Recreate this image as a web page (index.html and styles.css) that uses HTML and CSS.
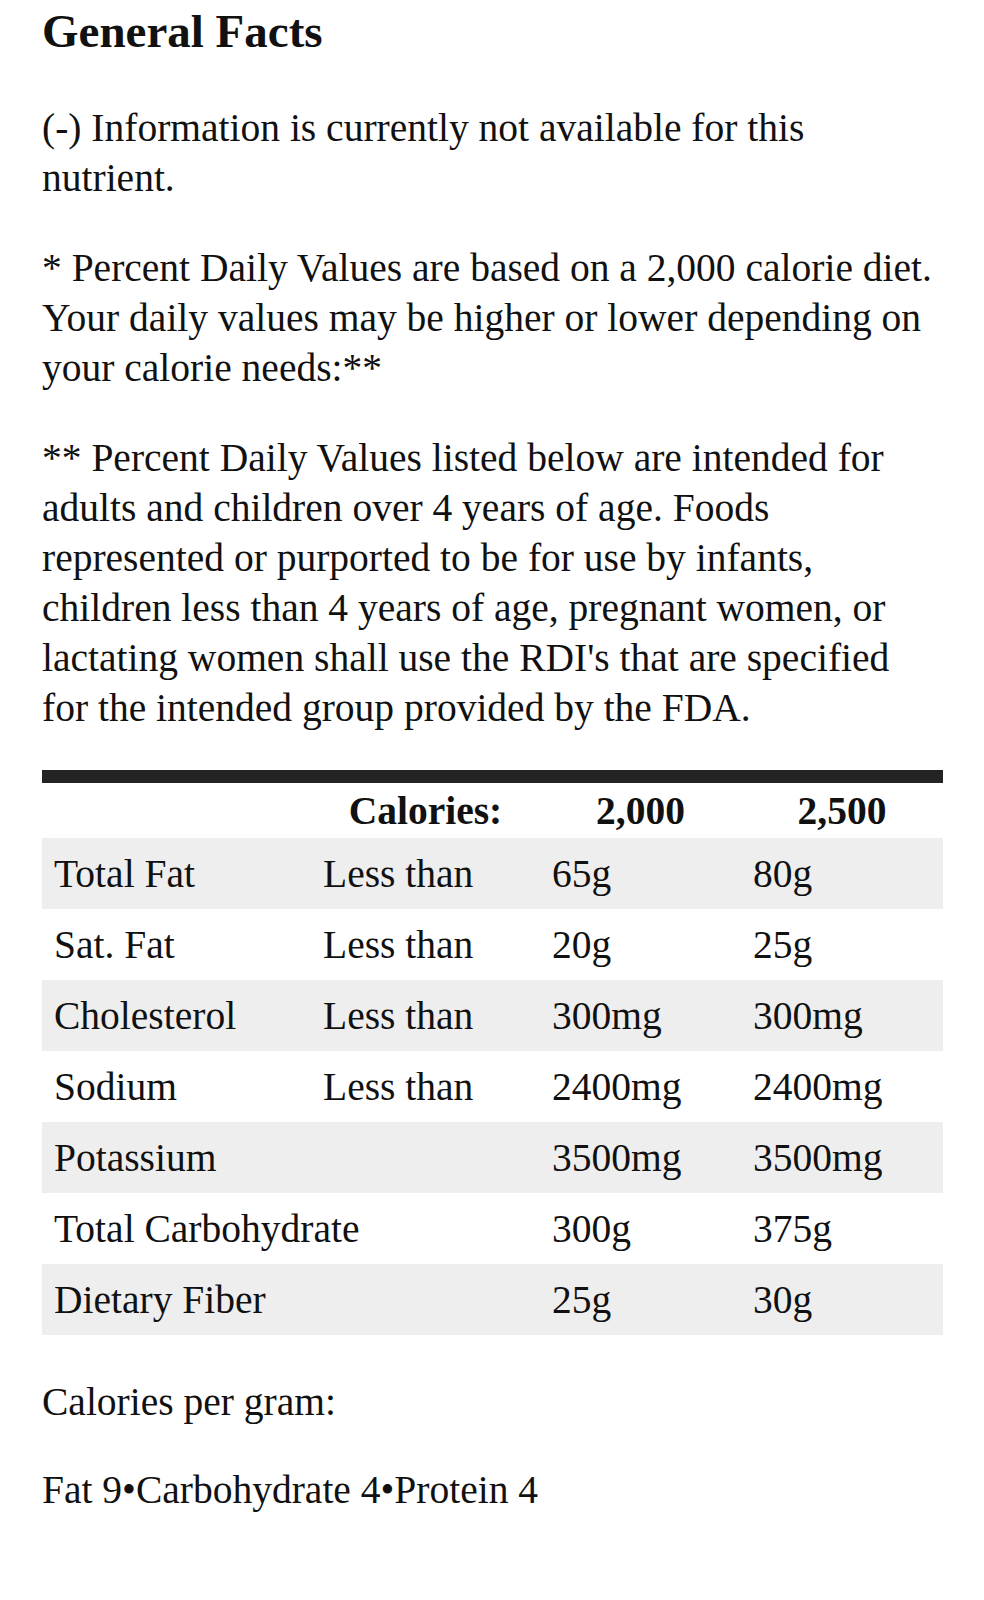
FILE: index.html
```html
<!DOCTYPE html>
<html>
<head>
<meta charset="utf-8">
<link rel="stylesheet" href="styles.css">
</head>
<body>
<main class="page">
  <h1 class="title">General Facts</h1>
  <p class="note">(-) Information is currently not available for this nutrient.</p>
  <p class="note">* Percent Daily Values are based on a 2,000 calorie diet. Your daily values may be higher or lower depending on your calorie needs:**</p>
  <p class="note">** Percent Daily Values listed below are intended for adults and children over 4 years of age. Foods represented or purported to be for use by infants, children less than 4 years of age, pregnant women, or lactating women shall use the RDI's that are specified for the intended group provided by the FDA.</p>

  <table class="dv">
    <colgroup>
      <col class="c1"><col class="c2"><col class="c3"><col class="c4">
    </colgroup>
    <thead>
      <tr>
        <th></th>
        <th>Calories:</th>
        <th>2,000</th>
        <th>2,500</th>
      </tr>
    </thead>
    <tbody>
      <tr class="alt"><td>Total Fat</td><td>Less than</td><td>65g</td><td>80g</td></tr>
      <tr><td>Sat. Fat</td><td>Less than</td><td>20g</td><td>25g</td></tr>
      <tr class="alt"><td>Cholesterol</td><td>Less than</td><td>300mg</td><td>300mg</td></tr>
      <tr><td>Sodium</td><td>Less than</td><td>2400mg</td><td>2400mg</td></tr>
      <tr class="alt"><td>Potassium</td><td></td><td>3500mg</td><td>3500mg</td></tr>
      <tr><td colspan="2">Total Carbohydrate</td><td>300g</td><td>375g</td></tr>
      <tr class="alt"><td colspan="2">Dietary Fiber</td><td>25g</td><td>30g</td></tr>
    </tbody>
  </table>

  <p class="cal">Calories per gram:</p>
  <p class="cal cal-list">Fat 9&bull;Carbohydrate 4&bull;Protein 4</p>
</main>
</body>
</html>
```

FILE: styles.css
```css
html, body {
  margin: 0;
  padding: 0;
  background: #ffffff;
}

body {
  font-family: "Liberation Serif", "Times New Roman", serif;
  color: #111111;
}

.page {
  width: 901px;
  padding: 0 0 0 42px;
}

.title {
  margin: 6px 0 0;
  font-size: 47px;
  line-height: 50px;
  font-weight: bold;
}

.note {
  width: 900px;
  margin: 47px 0 0;
  font-size: 39.5px;
  line-height: 50px;
}

.note + .note {
  margin-top: 40px;
}

.dv {
  width: 901px;
  margin-top: 37px;
  border-collapse: collapse;
  border-top: 13px solid #232323;
  table-layout: fixed;
  font-size: 39.5px;
}

.c1 { width: 269px; }
.c2 { width: 229px; }
.c3 { width: 201px; }
.c4 { width: 202px; }

.dv th {
  height: 55px;
  padding: 0;
  font-weight: bold;
  text-align: center;
  vertical-align: middle;
}

.dv td {
  height: 71px;
  padding: 0 0 0 12px;
  text-align: left;
  vertical-align: middle;
  white-space: nowrap;
}

.dv tr.alt td {
  background: #eeeeee;
}

.cal {
  margin: 42px 0 0;
  font-size: 39.5px;
  line-height: 50px;
}

.cal-list {
  margin-top: 38px;
}
```
